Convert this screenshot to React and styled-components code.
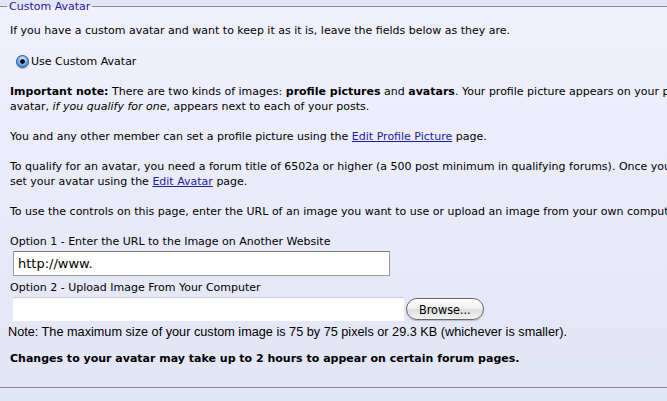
import React from "react";
import styled, { createGlobalStyle } from "styled-components";

const GlobalStyle = createGlobalStyle`
  html, body {
    margin: 0;
    padding: 0;
    background: #e3e6f6;
  }
  body {
    font-family: "DejaVu Sans", Verdana, sans-serif;
    font-size: 11px;
    color: #000;
  }
`;

const Page = styled.div`
  width: 667px;
  height: 401px;
  overflow: hidden;
  background: #e3e6f6;
`;

const Fieldset = styled.fieldset`
  margin: 0;
  padding: 5px 0 17px 10px;
  border: none;
  border-top: 1px solid #8a8a8a;
  border-bottom: 1px solid #8a8a8a;
  height: 388px;
  box-sizing: border-box;
  background: linear-gradient(#f1f1fd, #e2e5f5);
  min-width: 0;
  white-space: nowrap;
`;

const Legend = styled.legend`
  margin-left: -3px;
  padding: 0 2px;
  color: #22229a;
  font-size: 11px;
  line-height: 13px;
`;

const Para = styled.p`
  margin: ${(p) => (p.$first ? "5px" : "0")} 0 15px;
  line-height: 15px;
  font-size: 11px;
`;

const RadioRow = styled.label`
  display: flex;
  align-items: center;
  gap: 2px;
  margin: 16px 0 15px 6px;
  line-height: 15px;
`;

const Radio = styled.span`
  width: 13px;
  height: 13px;
  border-radius: 50%;
  box-sizing: border-box;
  border: 1px solid #2a4f8a;
  background: radial-gradient(circle at 50% 50%, #000 0 2px, transparent 2.5px),
    radial-gradient(circle at 50% 30%, #d6ecff 0, #6aa8ee 55%, #2f6fc9 100%);
  box-shadow: 0 1px 1px rgba(0, 0, 0, 0.25);
`;

const Link = styled.a`
  color: #1c1c9c;
  text-decoration: underline;
`;

const FieldLabel = styled.div`
  line-height: 15px;
  margin-bottom: 2px;
`;

const TextInput = styled.input`
  display: block;
  width: ${(p) => p.$w}px;
  height: 25px;
  box-sizing: border-box;
  margin: 0 0 4px 3px;
  padding: 1px 4px;
  border: 1px solid #9a9a9a;
  border-top-color: #7a7a7a;
  background: #fff;
  font-family: "DejaVu Sans", sans-serif;
  font-size: 13px;
  color: #000;
  outline: none;
`;

const FileRow = styled.div`
  display: flex;
  align-items: center;
  gap: 2px;
  margin: 0 0 4px 3px;
`;

const FileBox = styled.div`
  width: 391px;
  height: 24px;
  background: #fff;
  border-top: 1px solid #d0d0d8;
  box-sizing: border-box;
`;

const BrowseButton = styled.button`
  height: 22px;
  padding: 0 12px;
  border: 1px solid #6a6a6a;
  border-radius: 11px;
  background: linear-gradient(#ffffff, #f0f0f0 50%, #dcdcdc 51%, #f4f4f4);
  font-family: "DejaVu Sans Condensed", "DejaVu Sans", sans-serif;
  font-size: 12.5px;
  color: #000;
  box-shadow: 0 1px 1px rgba(0, 0, 0, 0.2);
`;

const SmallNote = styled.p`
  margin: 0 0 11px -2px;
  font-family: "Liberation Sans", Arial, sans-serif;
  font-size: 12.7px;
  line-height: 15px;
`;

export default function App() {
  return (
    <Page>
      <GlobalStyle />
      <Fieldset>
        <Legend>Custom Avatar</Legend>
        <Para $first>
          If you have a custom avatar and want to keep it as it is, leave the fields below as they are.
        </Para>
        <RadioRow>
          <Radio />
          Use Custom Avatar
        </RadioRow>
        <Para>
          <b>Important note:</b> There are two kinds of images: <b>profile pictures</b> and{" "}
          <b>avatars</b>. Your profile picture appears on your profile page and your
          <br />
          avatar, <i>if you qualify for one</i>, appears next to each of your posts.
        </Para>
        <Para>
          You and any other member can set a profile picture using the{" "}
          <Link href="#">Edit Profile Picture</Link> page.
        </Para>
        <Para>
          To qualify for an avatar, you need a forum title of 6502a or higher (a 500 post minimum in
          qualifying forums). Once you qualify, you can
          <br />
          set your avatar using the <Link href="#">Edit Avatar</Link> page.
        </Para>
        <Para>
          To use the controls on this page, enter the URL of an image you want to use or upload an
          image from your own computer.
        </Para>
        <FieldLabel>Option 1 - Enter the URL to the Image on Another Website</FieldLabel>
        <TextInput $w={377} defaultValue="http://www." />
        <FieldLabel>Option 2 - Upload Image From Your Computer</FieldLabel>
        <FileRow>
          <FileBox />
          <BrowseButton>Browse...</BrowseButton>
        </FileRow>
        <SmallNote>
          Note: The maximum size of your custom image is 75 by 75 pixels or 29.3 KB (whichever is
          smaller).
        </SmallNote>
        <Para>
          <b>Changes to your avatar may take up to 2 hours to appear on certain forum pages.</b>
        </Para>
      </Fieldset>
    </Page>
  );
}
